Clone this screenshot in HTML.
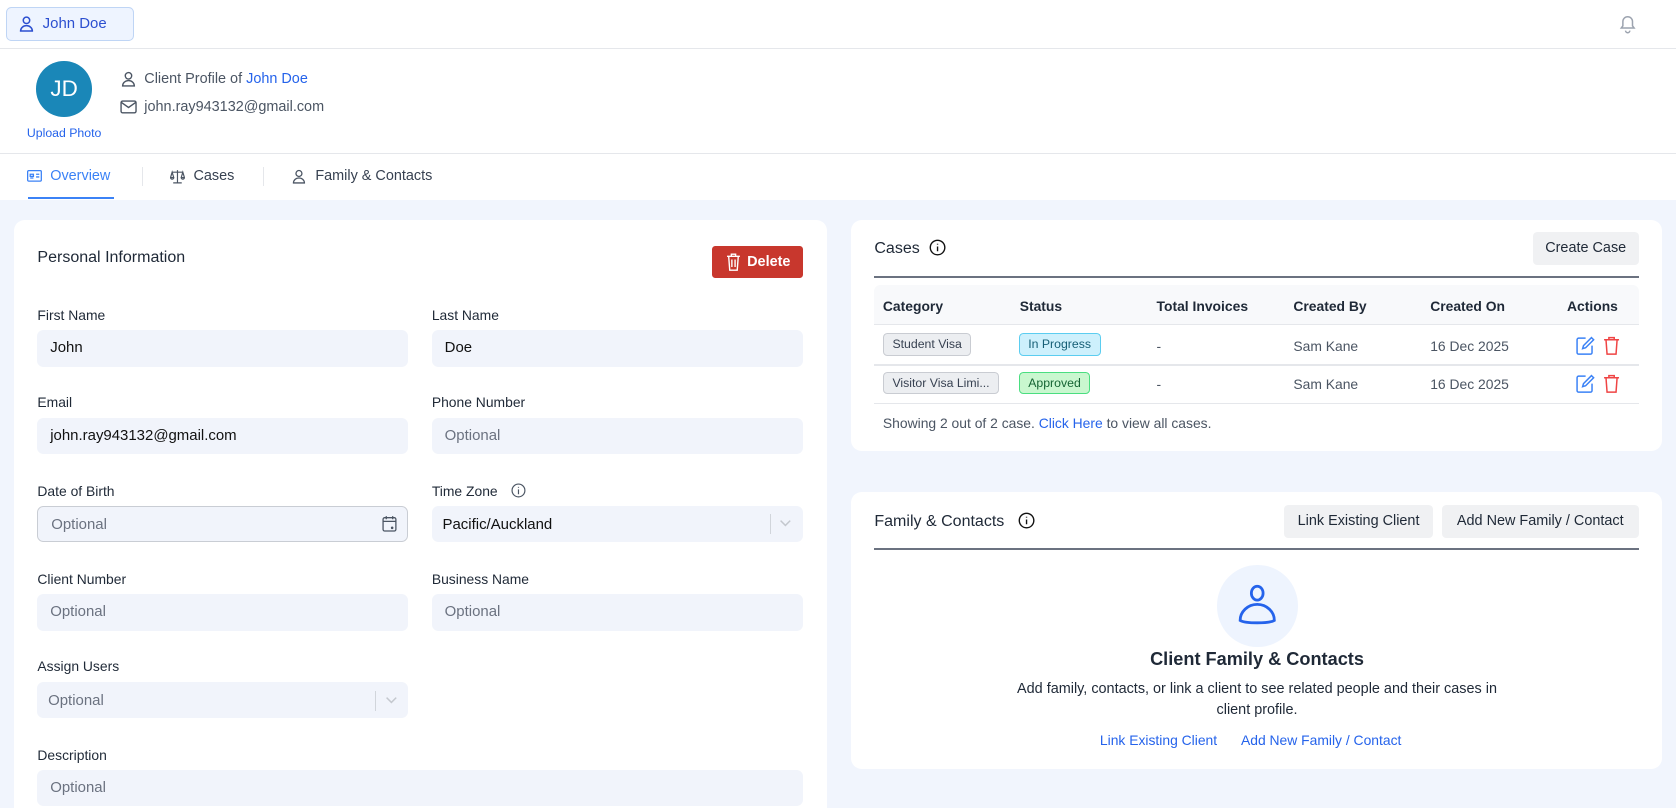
<!DOCTYPE html>
<html><head><meta charset="utf-8"><style>
*{box-sizing:border-box;margin:0;padding:0}
html,body{width:1676px;height:808px;overflow:hidden;background:#fff}
#r{zoom:1.0689;width:1568px;height:756px;position:relative;font-family:"Liberation Sans",sans-serif;color:#1f2937;overflow:hidden}
.a{position:absolute}
.gray{background:#f1f5fd}
.card{background:#fff;border-radius:10px;position:absolute}
.lbl{position:absolute;font-size:13px;font-weight:500;color:#1f2937}
.in{position:absolute;height:34px;width:347px;background:#f1f4fb;border-radius:6px;font-size:14px;line-height:34px;padding-left:12px;color:#111}
.ph{color:#6b7280}
.btn{position:absolute;background:#f0f1f3;border-radius:4px;font-size:13.5px;font-weight:500;color:#1f2937;text-align:center;line-height:31px}
.th{position:absolute;font-size:13px;font-weight:600;color:#1f2937}
.td{position:absolute;font-size:13px;color:#4b5563}
.tag{position:absolute;font-size:11.5px;border-radius:4px;padding:0 8px;line-height:19px;height:21px;border:1px solid}
svg{position:absolute}
</style></head><body><div id="r">
<div class="a" style="left:6px;top:7px;width:119px;height:31px;background:#eef4ff;border:1px solid #bfd5f5;border-radius:5px;color:#2c4fd0;font-size:14px;line-height:30px;padding-left:33px">John Doe</div>
<svg style="left:18px;top:14px" width="14" height="16" viewBox="0 0 14 16" fill="none" stroke="#2c4fd0" stroke-width="1.4"><circle cx="7" cy="5" r="3"/><path d="M1.5 15c0-3 2.5-5 5.5-5s5.5 2 5.5 5z"/></svg>
<svg style="left:1513px;top:12px" width="20" height="20" viewBox="0 0 20 20" fill="none" stroke="#9ca3af" stroke-width="1.4"><path d="M4 14h12l-1.5-2V8a4.5 4.5 0 0 0-9 0v4z"/><path d="M8 16.5a2 2 0 0 0 4 0"/></svg>
<div class="a" style="left:0;top:45px;width:1568px;height:1px;background:#e5e7eb"></div>
<div class="a" style="left:34px;top:57px;width:52px;height:52px;border-radius:50%;background:#1a87b8;color:#fff;font-size:21px;text-align:center;line-height:52px">JD</div>
<div class="a" style="left:20px;top:118px;width:80px;text-align:center;font-size:11.5px;color:#2563eb">Upload Photo</div>
<svg style="left:113px;top:66px" width="14" height="15" viewBox="0 0 14 15" fill="none" stroke="#4b5563" stroke-width="1.3"><circle cx="7" cy="4.5" r="3"/><path d="M1.5 14c0-3 2.5-5 5.5-5s5.5 2 5.5 5z"/></svg>
<div class="a" style="left:135px;top:66px;font-size:13.5px;color:#4b5563">Client Profile of <span style="color:#2563eb">John Doe</span></div>
<svg style="left:112px;top:94px" width="16" height="13" viewBox="0 0 16 13" fill="none" stroke="#4b5563" stroke-width="1.3"><rect x="1" y="1" width="14" height="11" rx="1.5"/><path d="M1 2l7 5 7-5"/></svg>
<div class="a" style="left:135px;top:93px;font-size:13.5px;color:#4b5563">john.ray943132@gmail.com</div>
<div class="a" style="left:0;top:143px;width:1568px;height:1px;background:#e5e7eb"></div>
<svg style="left:25px;top:159px" width="14" height="11" viewBox="0 0 14 11" fill="none" stroke="#3b82f6" stroke-width="1.2"><rect x="0.6" y="0.6" width="12.8" height="9.8" rx="1"/><path d="M3 7.5h3M3 4h3v2H3zM8.5 4h3M8.5 6.5h3"/></svg>
<div class="a" style="left:47px;top:157px;font-size:13.5px;color:#3b82f6">Overview</div>
<div class="a" style="left:26px;top:184px;width:81px;height:2px;background:#3b82f6"></div>
<div class="a" style="left:133px;top:156px;width:1px;height:18px;background:#e5e7eb"></div>
<svg style="left:159px;top:158px" width="14" height="14" viewBox="0 0 14 14" fill="none" stroke="#4b5563" stroke-width="1.1"><path d="M7 1v12M3 13h8M2 3h10M2 3l-1.5 5h3zM12 3l-1.5 5h3zM0.5 8a1.5 1.5 0 0 0 3 0M10.5 8a1.5 1.5 0 0 0 3 0"/></svg>
<div class="a" style="left:181px;top:157px;font-size:13.5px;color:#374151">Cases</div>
<div class="a" style="left:246px;top:156px;width:1px;height:18px;background:#e5e7eb"></div>
<svg style="left:273px;top:158px" width="13" height="14" viewBox="0 0 14 15" fill="none" stroke="#4b5563" stroke-width="1.3"><circle cx="7" cy="4.5" r="3"/><path d="M1.5 14c0-3 2.5-5 5.5-5s5.5 2 5.5 5z"/></svg>
<div class="a" style="left:295px;top:157px;font-size:13.5px;color:#374151">Family &amp; Contacts</div>
<div class="a gray" style="left:0;top:187px;width:1568px;height:569px"></div>

<div class="card" style="left:13px;top:206px;width:761px;height:570px">
<div class="a" style="left:22px;top:26px;font-size:15px;color:#1f2937">Personal Information</div>
<div class="a" style="left:653px;top:24px;width:85px;height:30px;background:#c8372d;border-radius:3px;color:#fff;font-size:13.5px;font-weight:600;line-height:30px;padding-left:33px">Delete</div>
<svg style="left:666px;top:30px" width="14" height="18" viewBox="0 0 14 18" fill="none" stroke="#fff" stroke-width="1.3"><path d="M1 4h12M5 4V2h4v2M2.5 4l1 13h7l1-13M5.5 7v7M8.5 7v7"/></svg>
</div>
<div class="lbl" style="left:35px;top:287px">First Name</div><div class="lbl" style="left:404px;top:287px">Last Name</div>
<div class="in" style="left:35px;top:309px">John</div><div class="in" style="left:404px;top:309px">Doe</div>
<div class="lbl" style="left:35px;top:369px">Email</div><div class="lbl" style="left:404px;top:369px">Phone Number</div>
<div class="in" style="left:35px;top:391px">john.ray943132@gmail.com</div><div class="in ph" style="left:404px;top:391px">Optional</div>
<div class="lbl" style="left:35px;top:452px">Date of Birth</div><div class="lbl" style="left:404px;top:452px">Time Zone</div>
<svg style="left:478px;top:452px" width="14" height="14" viewBox="0 0 14 14" fill="none" stroke="#4b5563" stroke-width="1.1"><circle cx="7" cy="7" r="6"/><path d="M7 6v4.5M7 3.6v.8"/></svg>
<div class="in ph" style="left:35px;top:473px;border:1px solid #c9cdd4;line-height:33px">Optional</div>
<svg style="left:357px;top:482px" width="14" height="16" viewBox="0 0 14 16" fill="none" stroke="#4b5563" stroke-width="1.2"><rect x="1" y="2.5" width="12" height="12.5" rx="1.5"/><path d="M1 6h12M4 1v3M10 1v3"/><circle cx="9.5" cy="12" r=".6" fill="#4b5563"/></svg>
<div class="in" style="left:404px;top:473px;padding-left:10px;line-height:36px">Pacific/Auckland</div>
<div class="a" style="left:720px;top:481px;width:1px;height:19px;background:#d1d5db"></div>
<svg style="left:729px;top:486px" width="12" height="8" viewBox="0 0 12 8" fill="none" stroke="#c4c8ce" stroke-width="1.4"><path d="M1.5 1.5l4.5 4.5 4.5-4.5"/></svg>
<div class="lbl" style="left:35px;top:534px">Client Number</div><div class="lbl" style="left:404px;top:534px">Business Name</div>
<div class="in ph" style="left:35px;top:556px">Optional</div><div class="in ph" style="left:404px;top:556px">Optional</div>
<div class="lbl" style="left:35px;top:616px">Assign Users</div>
<div class="in ph" style="left:35px;top:638px;padding-left:10px;line-height:36px">Optional</div>
<div class="a" style="left:351px;top:646px;width:1px;height:19px;background:#d1d5db"></div>
<svg style="left:360px;top:651px" width="12" height="8" viewBox="0 0 12 8" fill="none" stroke="#c4c8ce" stroke-width="1.4"><path d="M1.5 1.5l4.5 4.5 4.5-4.5"/></svg>
<div class="lbl" style="left:35px;top:699px">Description</div>
<div class="in ph" style="left:35px;top:720px;width:716px">Optional</div>

<div class="card" style="left:796px;top:206px;width:759px;height:216px"></div>
<div class="a" style="left:818px;top:224px;font-size:15px;color:#1f2937">Cases</div>
<svg style="left:869px;top:224px" width="16" height="16" viewBox="0 0 16 16" fill="none" stroke="#111" stroke-width="1.3"><circle cx="8" cy="8" r="6.8"/><path d="M8 7v4.5M8 4.4v.9"/></svg>
<div class="btn" style="left:1434px;top:217px;width:99px">Create Case</div>
<div class="a" style="left:818px;top:258px;width:715px;height:2px;background:#6b7280"></div>
<div class="a" style="left:818px;top:267px;width:715px;height:37px;background:#f8f9fb;border-radius:6px 6px 0 0;border-bottom:1px solid #e5e7eb"></div>
<div class="th" style="left:826px;top:279px">Category</div><div class="th" style="left:954px;top:279px">Status</div><div class="th" style="left:1082px;top:279px">Total Invoices</div><div class="th" style="left:1210px;top:279px">Created By</div><div class="th" style="left:1338px;top:279px">Created On</div><div class="th" style="left:1466px;top:279px">Actions</div>
<div class="a" style="left:818px;top:341px;width:715px;height:1px;background:#e5e7eb"></div>
<div class="a" style="left:818px;top:377px;width:715px;height:1px;background:#e5e7eb"></div>
<div class="tag" style="left:826px;top:312px;background:#eceef1;border-color:#c9ccd2;color:#374151">Student Visa</div>
<div class="tag" style="left:953px;top:312px;background:#cdf0fc;border-color:#5bcdf0;color:#155e75">In Progress</div>
<div class="tag" style="left:826px;top:348px;background:#eceef1;border-color:#c9ccd2;color:#374151">Visitor Visa Limi...</div>
<div class="tag" style="left:953px;top:348px;background:#c9f7cf;border-color:#4ade80;color:#166534">Approved</div>
<div class="td" style="left:1082px;top:316px">-</div><div class="td" style="left:1210px;top:316px">Sam Kane</div><div class="td" style="left:1338px;top:316px">16 Dec 2025</div>
<div class="td" style="left:1082px;top:352px">-</div><div class="td" style="left:1210px;top:352px">Sam Kane</div><div class="td" style="left:1338px;top:352px">16 Dec 2025</div>
<svg style="left:1474px;top:314px" width="18" height="18" viewBox="0 0 18 18" fill="none" stroke="#3b82f6" stroke-width="1.4"><path d="M9 2H2.5A1.5 1.5 0 0 0 1 3.5v12A1.5 1.5 0 0 0 2.5 17h11a1.5 1.5 0 0 0 1.5-1.5V9"/><path d="M14.5 1.5l2 2L9 11l-2.8.8.8-2.8z"/></svg>
<svg style="left:1500px;top:314px" width="16" height="18" viewBox="0 0 16 18" fill="none" stroke="#ef4444" stroke-width="1.4"><path d="M1 3.5h14M5.5 3.5V1.5h5v2M2.8 3.5l1 13.5h8.4l1-13.5"/></svg>
<svg style="left:1474px;top:350px" width="18" height="18" viewBox="0 0 18 18" fill="none" stroke="#3b82f6" stroke-width="1.4"><path d="M9 2H2.5A1.5 1.5 0 0 0 1 3.5v12A1.5 1.5 0 0 0 2.5 17h11a1.5 1.5 0 0 0 1.5-1.5V9"/><path d="M14.5 1.5l2 2L9 11l-2.8.8.8-2.8z"/></svg>
<svg style="left:1500px;top:350px" width="16" height="18" viewBox="0 0 16 18" fill="none" stroke="#ef4444" stroke-width="1.4"><path d="M1 3.5h14M5.5 3.5V1.5h5v2M2.8 3.5l1 13.5h8.4l1-13.5"/></svg>
<div class="a" style="left:826px;top:388px;font-size:13px;color:#4b5563">Showing 2 out of 2 case. <span style="color:#2563eb">Click Here</span> to view all cases.</div>

<div class="card" style="left:796px;top:460px;width:759px;height:259px"></div>
<div class="a" style="left:818px;top:479px;font-size:15px;color:#1f2937">Family &amp; Contacts</div>
<svg style="left:952px;top:479px" width="16" height="16" viewBox="0 0 16 16" fill="none" stroke="#111" stroke-width="1.3"><circle cx="8" cy="8" r="6.8"/><path d="M8 7v4.5M8 4.4v.9"/></svg>
<div class="btn" style="left:1201px;top:472px;width:140px">Link Existing Client</div>
<div class="btn" style="left:1349px;top:472px;width:184px">Add New Family / Contact</div>
<div class="a" style="left:818px;top:513px;width:715px;height:2px;background:#6b7280"></div>
<div class="a" style="left:1139px;top:529px;width:75px;height:76px;border-radius:50%;background:#eef4fe"></div>
<svg style="left:1158px;top:545px" width="36" height="42" viewBox="0 0 36 42" fill="none" stroke="#2563eb" stroke-width="2.6"><ellipse cx="18" cy="9.5" rx="5.5" ry="6.5"/><path d="M2 35c0-8 7-15 16-15s16 7 16 15c-5 3-27 3-32 0z"/></svg>
<div class="a" style="left:1056px;top:607px;width:240px;text-align:center;font-size:17px;font-weight:700;color:#1f2937">Client Family &amp; Contacts</div>
<div class="a" style="left:936px;top:635px;width:480px;text-align:center;font-size:13.5px;line-height:20px;color:#1f2937">Add family, contacts, or link a client to see related people and their cases in client profile.</div>
<div class="a" style="left:1029px;top:685px;font-size:13px;color:#2563eb">Link Existing Client</div>
<div class="a" style="left:1161px;top:685px;font-size:13px;color:#2563eb">Add New Family / Contact</div>
</div></body></html>
